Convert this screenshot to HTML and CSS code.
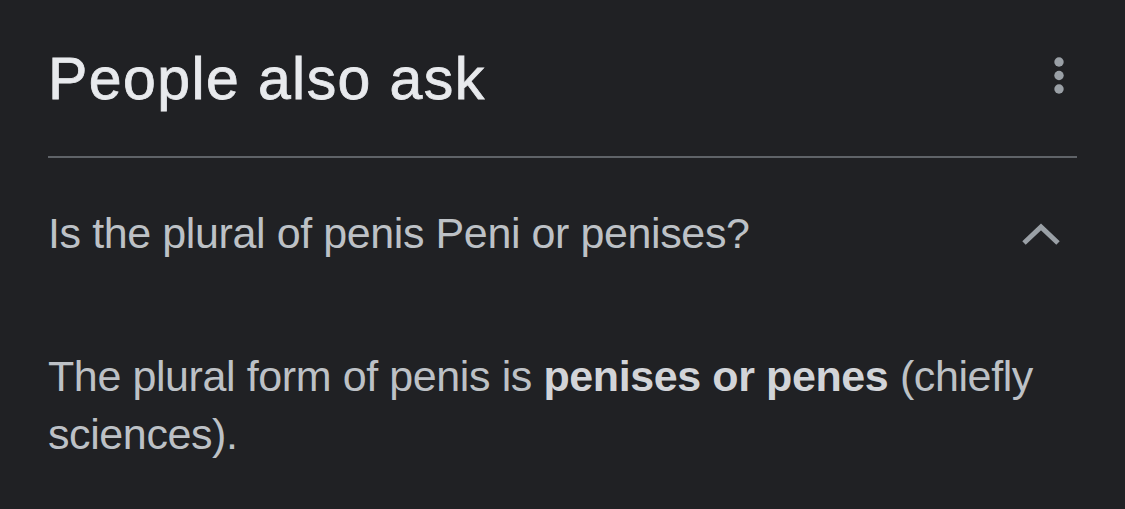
FILE: index.html
```html
<!DOCTYPE html>
<html lang="en">
<head>
    <meta charset="UTF-8">
    <meta name="viewport" content="width=device-width, initial-scale=1.0">
    <title>People also ask</title>
    <link rel="stylesheet" href="styles.css">
</head>
<body>
    <div class="panel">
        <div class="panel-head">
            <h2 class="panel-title">People also ask</h2>
            <button class="more-btn" aria-label="More options">
                <svg width="12" height="40" viewBox="0 0 12 40">
                    <circle cx="6" cy="6" r="4.7" fill="#9aa0a6"/>
                    <circle cx="6" cy="19.5" r="4.7" fill="#9aa0a6"/>
                    <circle cx="6" cy="33" r="4.7" fill="#9aa0a6"/>
                </svg>
            </button>
        </div>

        <div class="question">
            <span class="question-text">Is the plural of penis Peni or penises?</span>
            <svg class="chevron" width="40" height="26" viewBox="0 0 40 26">
                <path d="M3 22 L20 6 L37 22" fill="none" stroke="#9aa0a6" stroke-width="5"/>
            </svg>
        </div>

        <p class="answer">The plural form of penis is <b>penises or penes</b> (chiefly sciences).</p>
    </div>
</body>
</html>
```

FILE: styles.css
```css
html, body {
    margin: 0;
    background-color: #202124;
}
body {
    font-family: 'Liberation Sans', Arial, sans-serif;
    color: #e8eaed;
}
.panel {
    padding: 0 48px;
}
.panel-head {
    display: flex;
    justify-content: space-between;
    align-items: flex-start;
    height: 156px;
    border-bottom: 2px solid #5f6368;
}
.panel-title {
    margin: 0;
    padding-top: 40px;
    font-size: 59px;
    font-weight: normal;
    line-height: 78px;
    letter-spacing: 1.4px;
    -webkit-text-stroke: 0.8px #e8eaed;
    color: #e8eaed;
}
.more-btn {
    background: none;
    border: none;
    padding: 0;
    margin: 56px 12px 0 0;
    cursor: pointer;
}
.question {
    display: flex;
    justify-content: space-between;
    align-items: center;
    height: 150px;
}
.question-text {
    font-size: 43px;
    letter-spacing: -0.4px;
    color: #bdc1c6;
}
.chevron {
    margin-right: 16px;
    margin-top: 2px;
}
.answer {
    margin: 0;
    padding-top: 39px;
    font-size: 43px;
    line-height: 58px;
    letter-spacing: -0.4px;
    color: #bdc1c6;
}
.answer b {
    color: #d2d4d8;
}
```
